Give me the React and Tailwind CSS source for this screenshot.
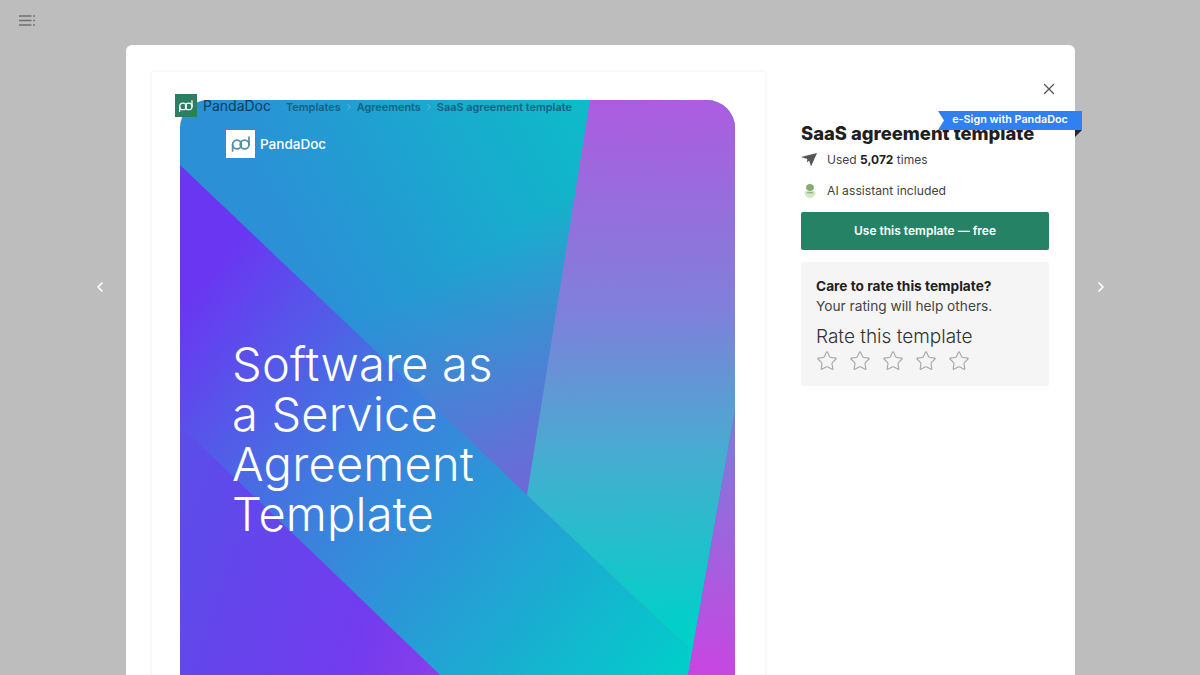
// App.jsx
// Template preview modal: document cover on the left, template details on the right.
import { ChevronLeft, ChevronRight, ChevronRight as Sep, Star, X } from 'lucide-react'

const FONT = "font-['Inter','Liberation_Sans',sans-serif]"

function PdMark({ className, color = '#fff' }) {
  return (
    <svg viewBox="0 0 24 24" className={className} fill="none" stroke={color} strokeWidth="1.7">
      <circle cx="8" cy="12.5" r="4.4" />
      <circle cx="15.6" cy="12.5" r="4.4" />
      <path d="M3.6 12.5v6.5M20 12.5V5" strokeLinecap="round" />
    </svg>
  )
}

function MenuIcon() {
  return (
    <svg viewBox="0 0 16 11" className="w-4 h-[11px]" fill="none" stroke="#707070" strokeWidth="1.3">
      <path d="M0 1h12.500M0 5.500h12.500M0 10h12.500" />
      <path d="M14.200 1H16M14.200 5.500H16M14.200 10H16" />
    </svg>
  )
}

function PlaneIcon() {
  return (
    <svg viewBox="0 0 16 14" className="w-4 h-[14px]">
      <path d="M0 4 16 0l-6 13.500-1.800-6-2.200 2 .3-3.500z" fill="#555" />
    </svg>
  )
}

function AiIcon() {
  return (
    <svg viewBox="0 0 14 14" className="w-[14px] h-[14px]">
      <path d="M1.500 9c0-1.800 2.300-2.800 5.500-2.800s5.500 1 5.500 2.800S10.300 14 7 14 1.500 10.800 1.500 9z" fill="#d5e6c8" />
      <path d="M3 3.500C3 1.500 4.800 0 7 0s4 1.500 4 3.500S9.200 7 7 7 3 5.500 3 3.500z" fill="#86ab76" />
      <path d="M4 8h6v1.400H4z" fill="#93b883" />
    </svg>
  )
}

// document cover art, coordinates are px from the top left of the page
function CoverArt() {
  return (
    <svg viewBox="0 0 555 575" className="absolute left-0 top-0 w-[555px] h-[575px]">
      <defs>
        <linearGradient id="top" gradientUnits="userSpaceOnUse" x1="420" y1="10" x2="130" y2="170">
          <stop offset="0" stopColor="#0cbdc8" />
          <stop offset="1" stopColor="#2b90d6" />
        </linearGradient>
        <linearGradient id="fade" gradientUnits="userSpaceOnUse" x1="350" y1="390" x2="230" y2="190">
          <stop offset="0" stopColor="#6f68d8" stopOpacity="1" />
          <stop offset="1" stopColor="#6f68d8" stopOpacity="0" />
        </linearGradient>
        <linearGradient id="band" gradientUnits="userSpaceOnUse" x1="30" y1="170" x2="510" y2="560">
          <stop offset="0" stopColor="#6a36f2" />
          <stop offset="0.38" stopColor="#3d7fde" />
          <stop offset="0.72" stopColor="#1ea8d2" />
          <stop offset="1" stopColor="#02cdca" />
        </linearGradient>
        <linearGradient id="low" gradientUnits="userSpaceOnUse" x1="0" y1="400" x2="500" y2="575">
          <stop offset="0" stopColor="#5c4cea" />
          <stop offset="0.4" stopColor="#713cee" />
          <stop offset="1" stopColor="#c445e2" />
        </linearGradient>
        <linearGradient id="panel" gradientUnits="userSpaceOnUse" x1="460" y1="0" x2="470" y2="530">
          <stop offset="0" stopColor="#ad5ce0" />
          <stop offset="0.4" stopColor="#7f80da" />
          <stop offset="0.68" stopColor="#44aed0" />
          <stop offset="1" stopColor="#00d0c8" />
        </linearGradient>
        <linearGradient id="edge" gradientUnits="userSpaceOnUse" x1="540" y1="300" x2="520" y2="575">
          <stop offset="0" stopColor="#7580da" />
          <stop offset="1" stopColor="#c846e2" />
        </linearGradient>
      </defs>
      <rect width="555" height="575" fill="url(#top)" />
      <rect width="555" height="575" fill="url(#fade)" />
      <path d="M0 65 347 395 508 548V575H260L0 325z" fill="url(#band)" />
      <path d="M0 325 260 575H0z" fill="url(#low)" />
      <path d="M410 0H555V310L508 575V548L347 395z" fill="url(#panel)" />
      <path d="M555 310V575H508z" fill="url(#edge)" />
    </svg>
  )
}

export default function App() {
  return (
    <div className={`relative h-[675px] overflow-hidden bg-[#bdbdbd] ${FONT}`}>
      <div className="absolute left-[19px] top-[15px]"><MenuIcon /></div>
      <ChevronLeft className="absolute left-[92px] top-[279px] w-4 h-4 text-white" strokeWidth={2.5} />
      <ChevronRight className="absolute left-[1093px] top-[279px] w-4 h-4 text-white" strokeWidth={2.5} />

      {/* Modal */}
      <div className="ml-[126px] mt-[45px] w-[949px] h-[640px] bg-white rounded-md flex pl-[26px] pt-[27px]">

        {/* Document preview */}
        <div className="relative w-[613px] pl-[28px] pt-[28px] shadow-[0_0_4px_rgba(0,0,0,0.08)]">
          <div className="relative w-[555px] h-[620px] rounded-t-[28px] overflow-hidden">
            <CoverArt />
            <div className="relative flex items-center gap-[5px] ml-[46px] mt-[30px]">
              <div className="w-[29px] h-[28px] bg-white flex items-center justify-center">
                <PdMark className="w-[24px] h-[24px]" color="#4f8fa8" />
              </div>
              <span className="text-[13.5px] font-medium text-white">PandaDoc</span>
            </div>
            <h2 className="relative ml-[52px] mt-[181px] text-[47px] leading-[50px] tracking-[0.2px] font-light text-white">
              Software as<br />a Service<br />Agreement<br />Template
            </h2>
          </div>

          {/* Breadcrumb over the cover */}
          <div className="absolute left-[23px] top-[22px] flex items-center">
            <div className="w-[22px] h-[23px] bg-[#2a7f62] flex items-center justify-center">
              <PdMark className="w-[18px] h-[18px]" />
            </div>
            <span className="ml-[6px] text-[14px] text-[#0c3f5c]">PandaDoc</span>
            <div className="ml-[15px] mt-[4px] flex items-center text-[10.9px] font-semibold text-[#17607f]">
              <span>Templates</span>
              <Sep className="w-[10px] h-[10px] mx-[3px] text-[#7fb6cc]" />
              <span>Agreements</span>
              <Sep className="w-[10px] h-[10px] mx-[3px] text-[#7fb6cc]" />
              <span>SaaS agreement template</span>
            </div>
          </div>
        </div>

        {/* Details */}
        <div className="relative w-[248px] ml-[36px] pt-[8px] text-[#1f1f1f]">
          <div className="flex justify-end -mr-[9px]">
            <X className="w-[18px] h-[18px] text-[#555]" strokeWidth={1.75} />
          </div>
          <h1 className="mt-[24px] text-[18.4px] leading-[22px] font-extrabold whitespace-nowrap">SaaS agreement template</h1>
          <div className="mt-[6px] flex items-center gap-[10px] text-[12px] text-[#444] h-[20px]">
            <PlaneIcon />
            <span>Used <b className="text-[#1f1f1f]">5,072</b> times</span>
          </div>
          <div className="mt-[11px] flex items-center gap-[10px] text-[12.2px] text-[#444] h-[20px] pl-[2px]">
            <AiIcon />
            <span>AI assistant included</span>
          </div>
          <button className="mt-[11px] w-full h-[38px] rounded-[2px] bg-[#268265] text-white text-[12px] font-semibold">
            Use this template — free
          </button>
          <div className="mt-[12px] h-[124px] bg-[#f5f5f5] rounded-[2px] px-[15px] pt-[14px]">
            <p className="text-[13.7px] leading-[20px] font-bold">Care to rate this template?</p>
            <p className="text-[13.7px] leading-[20px] text-[#444]">Your rating will help others.</p>
            <p className="mt-[9px] text-[19px] leading-[24px] text-[#333] font-light">Rate this template</p>
            <div className="flex gap-[11px] mt-[1px]">
              {[1, 2, 3, 4, 5].map((n) => (
                <Star key={n} className="w-[22px] h-[22px] text-[#a8a8a8]" strokeWidth={1.25} />
              ))}
            </div>
          </div>

          {/* Ribbon */}
          <div className="absolute left-[137px] top-[39px] w-[144px] h-[19px] bg-[#2f80f0] text-white text-[10.8px] font-semibold flex items-center justify-center [clip-path:polygon(0_0,100%_0,100%_100%,0_100%,6px_50%)]">
            e-Sign with PandaDoc
          </div>
          <div className="absolute left-[274px] top-[58px] w-[7px] h-[7px] bg-[#1f2937] [clip-path:polygon(0_0,100%_0,0_100%)]" />
        </div>
      </div>
    </div>
  )
}
